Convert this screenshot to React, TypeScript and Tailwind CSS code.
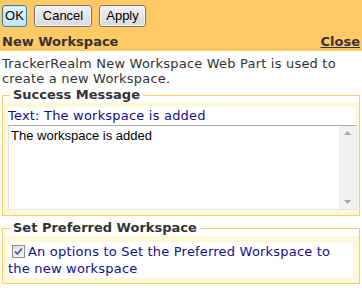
import React from "react";

const verdana = "font-['Verdana','DejaVu_Sans',sans-serif]";
const arial = "font-['Liberation_Sans',Arial,sans-serif]";

const Btn = ({ label, w, focused }: { label: string; w: string; focused?: boolean }) => (
  <button
    className={`${w} h-[22px] ${arial} text-[13px] text-black rounded-[3px] border ${
      focused
        ? "border-[#3c7fb1] bg-gradient-to-b from-[#eaf6fd] to-[#bee6fd] shadow-[inset_0_0_0_1px_#c6e9fc]"
        : "border-[#707070] bg-gradient-to-b from-[#f2f2f2] to-[#d9d9d9] shadow-[inset_0_0_0_1px_#fbfbfb]"
    }`}
  >
    {label}
  </button>
);

const ScrollBar = () => (
  <div className="w-[17px] bg-[#f0f0f0] flex flex-col justify-between items-center py-[5px]">
    <svg width="7" height="4" viewBox="0 0 7 4">
      <path d="M0 4 L3.5 0 L7 4 Z" fill="#a8a8a8" />
    </svg>
    <svg width="7" height="4" viewBox="0 0 7 4">
      <path d="M0 0 L7 0 L3.5 4 Z" fill="#a8a8a8" />
    </svg>
  </div>
);

const CheckBox = () => (
  <span className="inline-block align-[-2px] w-[13px] h-[13px] border border-[#8f8f8f] bg-gradient-to-br from-[#dcdcdc] to-[#fbfbfb] mr-[3px]">
    <svg width="11" height="11" viewBox="0 0 11 11" className="block">
      <path d="M2 5.5 L4.3 8 L9 2.5" stroke="#4a5f97" strokeWidth="1.8" fill="none" />
    </svg>
  </span>
);

export default function App() {
  return (
    <div className={`w-[362px] h-[288px] bg-white overflow-hidden ${verdana} text-[13px] text-[#333]`}>
      <div className="bg-[#ffc966] h-[51px] px-[2px] pt-[5px]">
        <div className="flex gap-[7px]">
          <Btn label="OK" w="w-[25px]" focused />
          <Btn label="Cancel" w="w-[58px]" />
          <Btn label="Apply" w="w-[47px]" />
        </div>
        <div className="flex justify-between items-center mt-[7px] font-bold leading-[16px]">
          <span>New Workspace</span>
          <span className="underline">Close</span>
        </div>
      </div>

      <p className="px-[2px] pt-[5px] leading-[15px] tracking-[0.2px] text-[#333]">
        TrackerRealm New Workspace Web Part is used to create a new Workspace.
      </p>

      <fieldset className="mx-[2px] mt-[1px] border border-[#ffcc66]">
        <legend className="ml-[7px] px-[3px] font-bold leading-[16px]">Success Message</legend>
        <div className="bg-[#fff8d6] pt-[4px] pb-[5px] pl-[5px] pr-[2px]">
          <div className="bg-white mr-[2px] h-[18px] leading-[18px] tracking-[0.2px] text-[#10108a]">
            Text: The workspace is added
          </div>
          <div className="flex h-[85px] border border-t-[#abadb3] border-l-[#dbdfe6] border-r-[#e3e9ef] border-b-[#e3e9ef] bg-white">
            <div className={`flex-1 ${arial} text-[13px] text-black px-[2px] pt-[2px] leading-[16px]`}>
              The workspace is added
            </div>
            <ScrollBar />
          </div>
        </div>
      </fieldset>

      <fieldset className="mx-[2px] mt-[4px] border border-[#ffcc66]">
        <legend className="ml-[7px] px-[3px] font-bold leading-[16px]">Set Preferred Workspace</legend>
        <div className="bg-[#fff8d6] p-[5px] pt-[6px]">
          <div className="bg-white leading-[17px] tracking-[0.2px] text-[#10108a] py-[1px]">
            <span className="ml-[4px]" />
            <CheckBox />
            An options to Set the Preferred Workspace to the new workspace
          </div>
        </div>
      </fieldset>
    </div>
  );
}
